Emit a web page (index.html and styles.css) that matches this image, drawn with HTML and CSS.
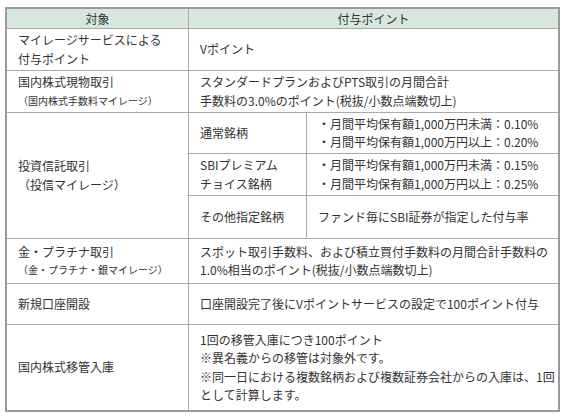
FILE: index.html
```html
<!DOCTYPE html>
<html lang="ja">
<head>
<meta charset="utf-8">
<link rel="stylesheet" href="styles.css">
</head>
<body>
<div class="tbl">
  <div class="c head">対象</div>
  <div class="c head span2">付与ポイント</div>

  <div class="c">マイレージサービスによる<br>付与ポイント</div>
  <div class="c span2">Vポイント</div>

  <div class="c">国内株式現物取引<br><span class="sub">（国内株式手数料マイレージ）</span></div>
  <div class="c span2">スタンダードプランおよびPTS取引の月間合計<br>手数料の3.0%のポイント(税抜/小数点端数切上)</div>

  <div class="c rows3">投資信託取引<br>（投信マイレージ）</div>
  <div class="c">通常銘柄</div>
  <div class="c">・月間平均保有額1,000万円未満：0.10%<br>・月間平均保有額1,000万円以上：0.20%</div>
  <div class="c">SBIプレミアム<br>チョイス銘柄</div>
  <div class="c">・月間平均保有額1,000万円未満：0.15%<br>・月間平均保有額1,000万円以上：0.25%</div>
  <div class="c">その他指定銘柄</div>
  <div class="c">ファンド毎にSBI証券が指定した付与率</div>

  <div class="c">金・プラチナ取引<br><span class="sub">（金・プラチナ・銀マイレージ）</span></div>
  <div class="c span2">スポット取引手数料、および積立買付手数料の月間合計手数料の<br>1.0%相当のポイント(税抜/小数点端数切上)</div>

  <div class="c">新規口座開設</div>
  <div class="c span2">口座開設完了後にVポイントサービスの設定で100ポイント付与</div>

  <div class="c">国内株式移管入庫</div>
  <div class="c span2">1回の移管入庫につき100ポイント<br>※異名義からの移管は対象外です。<br>※同一日における複数銘柄および複数証券会社からの入庫は、1回<br>として計算します。</div>
</div>
</body>
</html>
```

FILE: styles.css
```css
html, body {
  margin: 0;
  padding: 0;
  background: #ffffff;
}
body {
  padding: 7px 0 0 5px;
  font-family: "Noto Sans CJK JP", "Noto Sans", sans-serif;
  font-size: 12px;
  color: #333333;
}
.tbl {
  display: grid;
  width: 551px;
  grid-template-columns: 181px 117px 251px;
  grid-template-rows: 19px 41px 41px 40px 41px 42px 44px 40px 85px;
  gap: 1px;
  background: #a9a9a9;
  border: 2px solid #9a9a9a;
}
.c {
  background: #ffffff;
  display: flex;
  flex-direction: column;
  justify-content: center;
  padding: 0 0 0 11px;
  line-height: 18.5px;
  white-space: nowrap;
}
.head {
  background: #d6e8dd;
  align-items: center;
  padding: 0;
  line-height: 16px;
}
.span2 {
  grid-column: span 2;
}
.rows3 {
  grid-row: span 3;
}
.sub {
  font-size: 10px;
}
```
